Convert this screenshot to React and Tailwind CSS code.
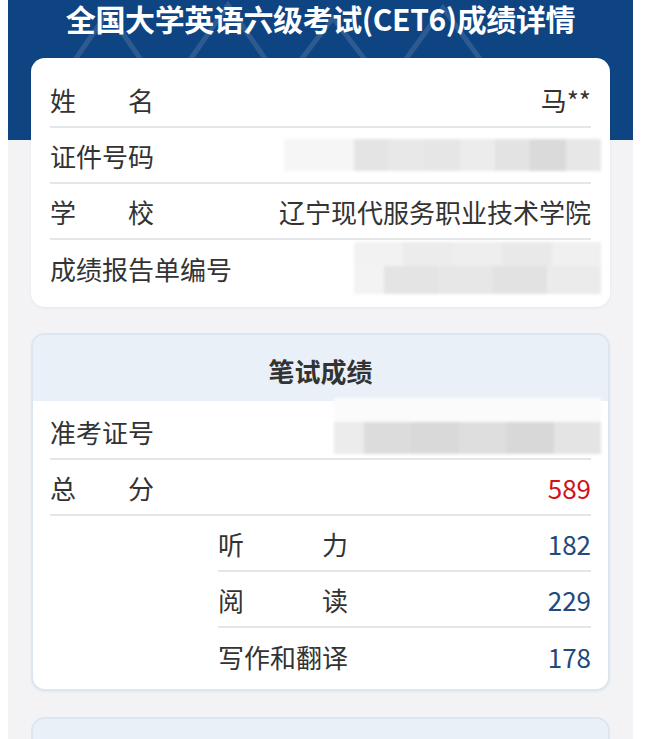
import React from 'react';

const font = { fontFamily: '"Noto Sans CJK SC", "Noto Sans", sans-serif' };

const Redacted = ({ light = 0, blocks = [], className = '' }) => (
  <div className={`flex h-[32px] blur-[1.5px] ${className}`}>
    {light > 0 && <div className="bg-[#f6f6f6]" style={{ width: light }} />}
    {blocks.map((c, i) => (
      <div key={i} className="flex-1" style={{ backgroundColor: c }} />
    ))}
  </div>
);

const Row = ({ label, value, valueClass = 'text-[#333]', indent = false, last = false, children }) => (
  <div className={`flex ${indent ? 'pl-[168px]' : ''}`}>
    <div className={`flex-1 flex items-center justify-between h-[56px] ${last ? '' : 'border-b-2 border-[#e5e6e8]'}`}>
      <span className="text-[#333] whitespace-pre">{label}</span>
      {children ? children : <span className={valueClass}>{value}</span>}
    </div>
  </div>
);

const Decor = () => (
  <svg className="absolute left-0 top-0" width="625" height="140" viewBox="0 0 625 140" fill="none">
    <g stroke="#ffffff" strokeOpacity="0.12" strokeWidth="5">
      <path d="M60 70 L100 12 L140 70" />
      <path d="M175 70 L220 5 L265 70" />
      <path d="M285 70 L325 18 L365 70" />
      <path d="M390 70 L435 8 L480 70" />
    </g>
  </svg>
);

export default function App() {
  return (
    <div className="h-[739px] overflow-hidden bg-white pl-[8px] pr-[14px] text-[26px]" style={font}>
      <div className="bg-[#f3f3f5] min-h-full">
        <div className="relative h-[140px] bg-[#0f4482] overflow-hidden">
          <Decor />
          <h1 className="relative text-white font-bold text-[30px] leading-[36px] text-center tracking-[-0.4px]">
            全国大学英语六级考试(CET6)成绩详情
          </h1>
        </div>

        <div className="px-[23px] -mt-[82px] relative flex flex-col gap-[26px] pb-8">
          <div className="bg-white rounded-[14px] px-[19px] pt-[14px] pb-[11px] shadow-[0_1px_3px_rgba(0,0,0,0.06)]">
            <Row label={'姓\u3000\u3000名'} value="马**" />
            <Row label="证件号码">
              <Redacted
                className="w-[317px] -mr-[10px]"
                light={70}
                blocks={['#e4e4e4', '#e8e8e8', '#e6e6e6', '#ececec', '#e3e3e3', '#dadada', '#e7e7e7']}
              />
            </Row>
            <Row label={'学\u3000\u3000校'} value="辽宁现代服务职业技术学院" />
            <Row label="成绩报告单编号" last>
              <div className="w-[247px] -mr-[10px] flex flex-col blur-[1.5px]">
                <div className="flex h-[24px]">
                  <div className="flex-1 bg-[#f2f2f2]" />
                  <div className="flex-1 bg-[#ececec]" />
                  <div className="flex-1 bg-[#eeeeee]" />
                  <div className="flex-1 bg-[#e9e9e9]" />
                  <div className="flex-1 bg-[#f0f0f0]" />
                </div>
                <div className="flex h-[28px]">
                  <div className="w-[30px] bg-[#f3f3f3]" />
                  <div className="flex-1 bg-[#e4e4e4]" />
                  <div className="flex-1 bg-[#e7e7e7]" />
                  <div className="flex-1 bg-[#e2e2e2]" />
                  <div className="flex-1 bg-[#ebebeb]" />
                </div>
              </div>
            </Row>
          </div>

          <div className="bg-white rounded-[14px] border-2 border-[#dbe6f1] overflow-hidden shadow-[0_1px_3px_rgba(0,0,0,0.05)]">
            <div className="h-[66px] bg-[#eaf0f8] flex items-center justify-center font-bold text-[#333] pt-[4px]">
              笔试成绩
            </div>
            <div className="px-[17px] pt-[3px] pb-[5px]">
              <Row label="准考证号">
                <div className="w-[267px] -mr-[10px] flex flex-col blur-[1.5px] -mt-[10px]">
                  <div className="h-[24px] bg-[#fbfbfb]" />
                  <div className="flex h-[32px]">
                    <div className="w-[30px] bg-[#ececec]" />
                    <div className="flex-1 bg-[#dcdcdc]" />
                    <div className="flex-1 bg-[#d9d9d9]" />
                    <div className="flex-1 bg-[#dedede]" />
                    <div className="flex-1 bg-[#d8d8d8]" />
                    <div className="flex-1 bg-[#e4e4e4]" />
                  </div>
                </div>
              </Row>
              <Row label={'总\u3000\u3000分'} value="589" valueClass="text-[#d0121b]" />
              <Row label={'听\u3000\u3000\u3000力'} value="182" valueClass="text-[#1e4a7d]" indent />
              <Row label={'阅\u3000\u3000\u3000读'} value="229" valueClass="text-[#1e4a7d]" indent />
              <Row label="写作和翻译" value="178" valueClass="text-[#1e4a7d]" indent last />
            </div>
          </div>

          <div className="bg-white rounded-[14px] border-2 border-[#dbe6f1] overflow-hidden">
            <div className="h-[66px] bg-[#eaf0f8] flex items-center justify-center font-bold text-[#333] pt-[4px]">
              口试成绩
            </div>
            <div className="h-[200px]" />
          </div>
        </div>
      </div>
    </div>
  );
}
